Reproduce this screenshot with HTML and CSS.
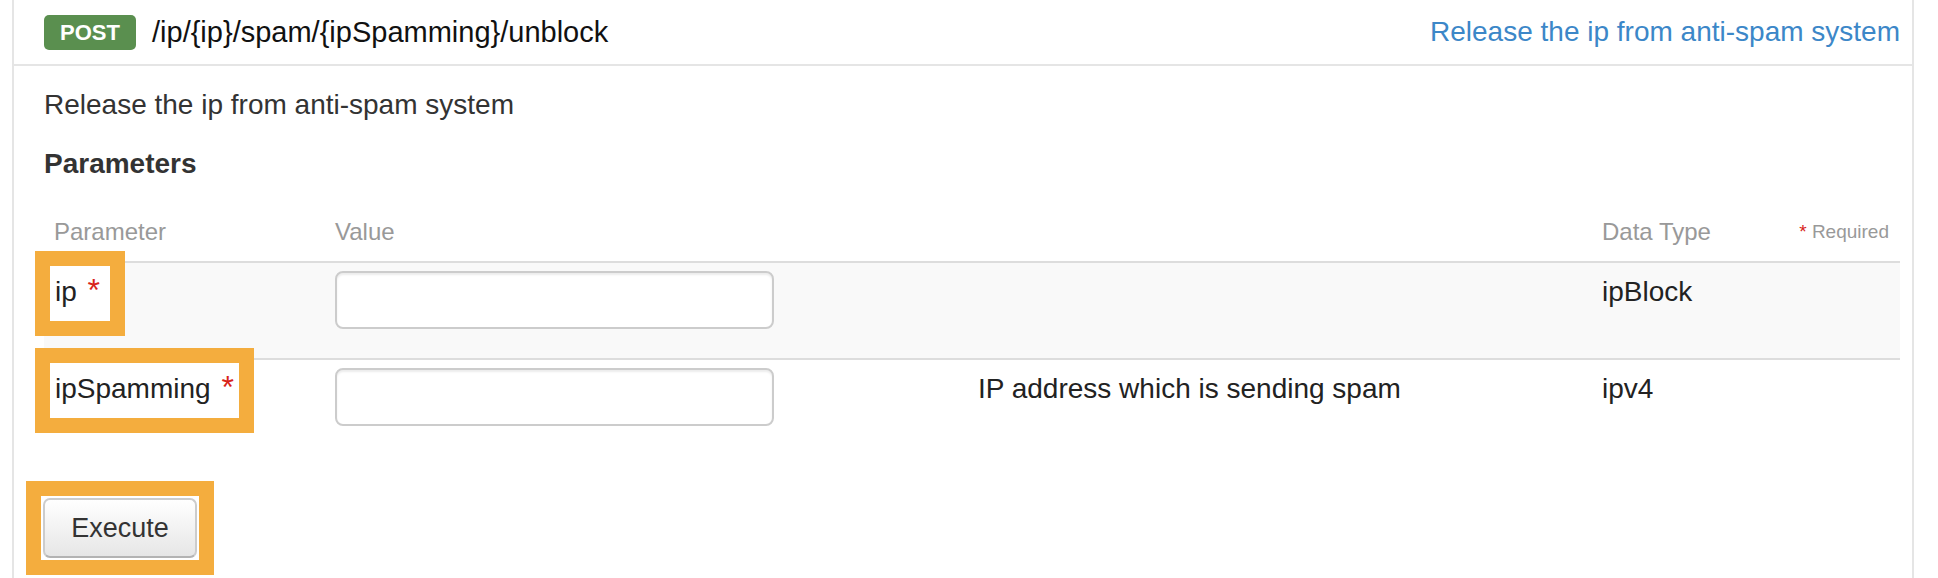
FILE: index.html
```html
<!DOCTYPE html>
<html lang="en">
<head>
    <meta charset="UTF-8">
    <title>POST /ip/{ip}/spam/{ipSpamming}/unblock</title>
    <link rel="stylesheet" href="styles.css">
</head>
<body>

    <div class="opblock">
        <div class="op-header">
            <span class="method">POST</span>
            <span class="path">/ip/{ip}/spam/{ipSpamming}/unblock</span>
            <a href="#" class="summary">Release the ip from anti-spam system</a>
        </div>

        <div class="op-body">
            <p class="desc">Release the ip from anti-spam system</p>
            <h4 class="params-title">Parameters</h4>

            <div class="params">
                <div class="prow head">
                    <div>Parameter</div>
                    <div>Value</div>
                    <div></div>
                    <div class="type-head">
                        <span>Data Type</span>
                        <span class="legend"><span class="req">*</span> Required</span>
                    </div>
                </div>

                <div class="prow shaded">
                    <div class="name"><span class="hl">ip <span class="req">*</span></span></div>
                    <div><input type="text" class="input-field"></div>
                    <div class="text"></div>
                    <div class="text">ipBlock</div>
                </div>

                <div class="prow">
                    <div class="name"><span class="hl">ipSpamming <span class="req">*</span></span></div>
                    <div><input type="text" class="input-field"></div>
                    <div class="text">IP address which is sending spam</div>
                    <div class="text">ipv4</div>
                </div>
            </div>

            <div class="actions">
                <span class="hl hl-btn"><button class="btn">Execute</button></span>
            </div>
        </div>
    </div>

</body>
</html>
```

FILE: styles.css
```css
body {
    font-family: "Liberation Sans", Arial, sans-serif;
    margin: 0;
    padding: 0;
    background: #fff;
    color: #333;
}

.opblock {
    margin-left: 12px;
    width: 1898px;
    border-left: 2px solid #e5e5e5;
    border-right: 2px solid #e5e5e5;
    min-height: 578px;
}

.op-header {
    display: flex;
    align-items: center;
    height: 64px;
    padding: 0 12px 0 30px;
    border-bottom: 2px solid #e5e5e5;
}

.method {
    background-color: #5a8f4f;
    color: white;
    font-weight: bold;
    font-size: 22px;
    width: 92px;
    height: 35px;
    line-height: 35px;
    text-align: center;
    border-radius: 5px;
}

.path {
    margin-left: 16px;
    font-size: 29px;
    color: #111;
}

.summary {
    margin-left: auto;
    font-size: 28px;
    color: #3c87c8;
    text-decoration: none;
}

.op-body {
    padding: 22px 12px 0 30px;
}

.desc {
    margin: 0;
    font-size: 28px;
    line-height: 34px;
}

.params-title {
    margin: 25px 0 0;
    font-size: 28px;
    line-height: 34px;
    font-weight: bold;
}

.prow {
    display: grid;
    grid-template-columns: 281px 643px 624px 1fr;
    border-top: 2px solid #ddd;
    padding: 8px 0 29px;
}

.prow > div {
    padding-left: 10px;
}

.prow.head {
    margin-top: 36px;
    border-top: none;
    padding: 0 0 14px;
    font-size: 24px;
    line-height: 30px;
    color: #999;
}

.type-head {
    display: flex;
    justify-content: space-between;
    align-items: center;
    padding-right: 11px;
}

.legend {
    font-size: 19px;
}

.prow.shaded {
    background: #f9f9f9;
}

.text,
.name {
    font-size: 28px;
    line-height: 42px;
    color: #222;
}

.req {
    color: #d8231a;
}

.hl {
    background: #fff;
    box-shadow: 0 0 0 15px #f4ad3e;
}

.prow > .name {
    display: flex;
    align-items: flex-start;
    padding-left: 6px;
}

.name .hl {
    display: block;
    min-width: 60px;
    box-sizing: border-box;
    line-height: 42px;
    padding: 5px 5px 8px 5px;
    margin-top: -5px;
}

.name .req {
    font-size: 32px;
    line-height: 0;
    margin-left: 3px;
}

.input-field {
    display: block;
    width: 439px;
    height: 58px;
    box-sizing: border-box;
    border: 2px solid #ccc;
    border-radius: 8px;
    background: #fff;
    box-shadow: inset 0 2px 2px rgba(0, 0, 0, 0.075);
}

.actions {
    margin-top: 41px;
}

.hl-btn {
    display: inline-block;
    padding: 2px;
    margin-left: -3px;
}

.btn {
    display: block;
    width: 154px;
    height: 60px;
    font-family: "Liberation Sans", Arial, sans-serif;
    font-size: 27px;
    color: #333;
    background: linear-gradient(#fff, #e6e6e6);
    border: 2px solid #ccc;
    border-bottom-color: #b3b3b3;
    border-radius: 7px;
    cursor: pointer;
}
```
